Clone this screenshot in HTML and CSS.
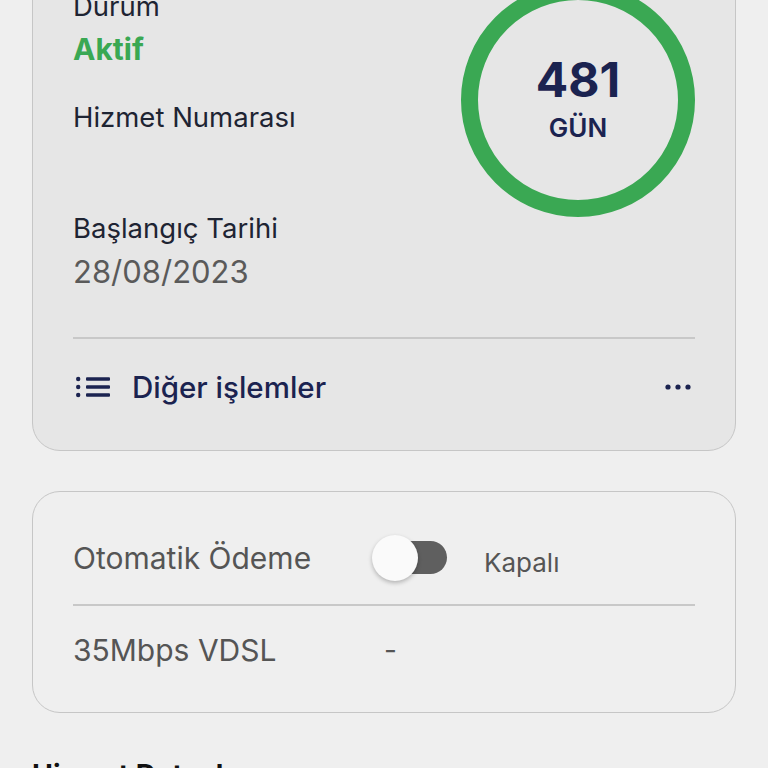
FILE: index.html
```html
<!DOCTYPE html>
<html lang="tr">

<head>
    <meta charset="UTF-8">
    <meta name="viewport" content="width=device-width, initial-scale=1.0">
    <title>Hizmet</title>
    <link rel="stylesheet" href="styles.css">
</head>

<body>
    <div id="page">
        <!-- Hizmet durumu kartı -->
        <div class="card status-card">
            <div class="status-top">
                <div class="status-info">
                    <div class="label label-durum">Durum</div>
                    <div class="value-active">Aktif</div>
                    <div class="label label-number">Hizmet Numarası</div>
                    <div class="label label-start">Başlangıç Tarihi</div>
                    <div class="value-date">28/08/2023</div>
                </div>
                <div class="day-ring">
                    <span class="day-count">481</span>
                    <span class="day-unit">GÜN</span>
                </div>
            </div>

            <div class="divider"></div>

            <div class="actions-row">
                <svg class="list-icon" width="34" height="22" viewBox="0 0 34 22">
                    <circle cx="2.2" cy="3" r="2.2" fill="#1b2350" />
                    <circle cx="2.2" cy="11" r="2.2" fill="#1b2350" />
                    <circle cx="2.2" cy="19" r="2.2" fill="#1b2350" />
                    <rect x="10" y="1.3" width="24" height="3.4" rx="1" fill="#1b2350" />
                    <rect x="10" y="9.3" width="24" height="3.4" rx="1" fill="#1b2350" />
                    <rect x="10" y="17.3" width="24" height="3.4" rx="1" fill="#1b2350" />
                </svg>
                <span class="actions-text">Diğer işlemler</span>
                <svg class="more-icon" width="26" height="6" viewBox="0 0 26 6">
                    <circle cx="3" cy="3" r="2.6" fill="#1b2350" />
                    <circle cx="13" cy="3" r="2.6" fill="#1b2350" />
                    <circle cx="23" cy="3" r="2.6" fill="#1b2350" />
                </svg>
            </div>
        </div>

        <!-- Ödeme ve paket kartı -->
        <div class="card payment-card">
            <div class="payment-row first-row">
                <span class="row-label">Otomatik Ödeme</span>
                <div class="toggle">
                    <div class="toggle-track"></div>
                    <div class="toggle-knob"></div>
                </div>
                <span class="toggle-state">Kapalı</span>
            </div>
            <div class="divider"></div>
            <div class="payment-row second-row">
                <span class="row-label">35Mbps VDSL</span>
                <span class="row-dash">-</span>
            </div>
        </div>

        <h2 class="section-title">Hizmet Detayları</h2>
    </div>
</body>

</html>
```

FILE: styles.css
```css
body {
  margin: 0;
  background-color: #efefef;
  font-family: "Inter", "Noto Sans", sans-serif;
  color: #1e2433;
}

#page {
  padding: 0 32px;
}

.card {
  border: 1px solid #c6c6c6;
  border-radius: 28px;
}

.status-card {
  margin-top: -52px;
  background-color: #e6e6e6;
  padding: 40px 40px 0;
}

.status-top {
  display: flex;
  justify-content: space-between;
  align-items: flex-start;
}

.label {
  font-size: 27.5px;
  line-height: 34px;
  color: #1e2433;
}

.value-active {
  margin-top: 8px;
  font-size: 30px;
  line-height: 36px;
  font-weight: 700;
  color: #3aa853;
}

.label-number {
  margin-top: 33px;
}

.label-start {
  margin-top: 77px;
}

.value-date {
  margin-top: 9px;
  font-size: 31px;
  line-height: 36px;
  color: #5a5a5a;
}

.day-ring {
  width: 200px;
  height: 200px;
  margin-top: -6px;
  border: 17px solid #3aa853;
  border-radius: 50%;
  display: flex;
  flex-direction: column;
  align-items: center;
  justify-content: center;
  color: #1b2350;
}

.day-count {
  font-size: 48px;
  line-height: 52px;
  font-weight: 700;
  margin-top: -2px;
}

.day-unit {
  font-size: 26px;
  line-height: 32px;
  font-weight: 600;
  margin-top: 6px;
}

.divider {
  height: 2px;
  background-color: #c8c8c8;
}

.status-card .divider {
  margin-top: 47px;
}

.actions-row {
  display: flex;
  align-items: center;
  padding: 30px 4px 45px 3px;
}

.list-icon {
  flex-shrink: 0;
}

.actions-text {
  margin-left: 22px;
  flex: 1;
  font-size: 29.5px;
  line-height: 36px;
  font-weight: 500;
  color: #1b2350;
}

.payment-card {
  margin-top: 40px;
  padding: 0 40px;
}

.payment-row {
  display: flex;
  align-items: center;
  height: 48px;
}

.first-row {
  padding: 42px 0 22px;
}

.second-row {
  padding: 20px 0 38px;
}

.row-label {
  width: 299px;
  font-size: 30px;
  line-height: 36px;
  color: #555555;
}

.toggle {
  position: relative;
  width: 75px;
  height: 46px;
}

.toggle-track {
  position: absolute;
  right: 0;
  top: 6px;
  width: 62px;
  height: 33px;
  border-radius: 17px;
  background-color: #5f5f5f;
}

.toggle-knob {
  position: absolute;
  left: 0;
  top: 0;
  width: 46px;
  height: 46px;
  border-radius: 50%;
  background-color: #fafafa;
  box-shadow: 0 2px 4px rgba(0, 0, 0, 0.25);
}

.toggle-state {
  margin-left: 37px;
  margin-top: 10px;
  font-size: 26px;
  line-height: 32px;
  color: #555555;
}

.row-dash {
  margin-left: 12px;
  font-size: 28px;
  color: #555555;
}

.section-title {
  margin: 45px 0 0;
  font-size: 28px;
  line-height: 34px;
  font-weight: 700;
  color: #111111;
}
```
